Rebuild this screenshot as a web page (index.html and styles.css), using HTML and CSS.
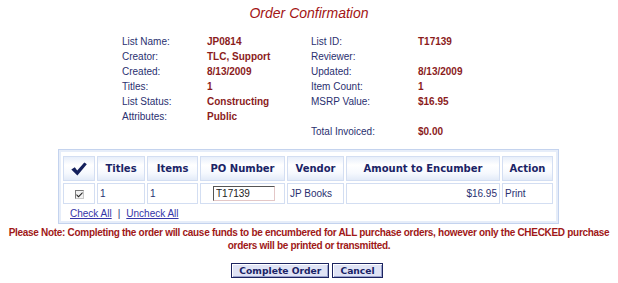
FILE: index.html
```html
<!DOCTYPE html>
<html>
<head>
<meta charset="utf-8">
<link rel="stylesheet" href="styles.css">
</head>
<body>
<h1 class="title">Order Confirmation</h1>
<div class="info">
  <span class="lbl">List Name:</span><span class="val">JP0814</span><span class="lbl">List ID:</span><span class="val">T17139</span>
  <span class="lbl">Creator:</span><span class="val">TLC, Support</span><span class="lbl">Reviewer:</span><span class="val"></span>
  <span class="lbl">Created:</span><span class="val">8/13/2009</span><span class="lbl">Updated:</span><span class="val">8/13/2009</span>
  <span class="lbl">Titles:</span><span class="val">1</span><span class="lbl">Item Count:</span><span class="val">1</span>
  <span class="lbl">List Status:</span><span class="val">Constructing</span><span class="lbl">MSRP Value:</span><span class="val">$16.95</span>
  <span class="lbl">Attributes:</span><span class="val">Public</span><span class="lbl"></span><span class="val"></span>
  <span class="lbl"></span><span class="val"></span><span class="lbl">Total Invoiced:</span><span class="val">$0.00</span>
</div>
<div class="box">
  <table class="po">
    <colgroup>
      <col class="c1"><col class="c2"><col class="c3"><col class="c4"><col class="c5"><col class="c6"><col class="c7">
    </colgroup>
    <thead>
      <tr>
        <th><svg class="bigcheck" width="16" height="14" viewBox="0 0 16 14"><path d="M0.3 7.4 L3.8 5.2 L6.2 8.4 L13.4 0.4 L15.8 2.2 L6.4 13.6 Z" fill="#14205c"/></svg></th>
        <th>Titles</th>
        <th>Items</th>
        <th>PO Number</th>
        <th>Vendor</th>
        <th>Amount to Encumber</th>
        <th>Action</th>
      </tr>
    </thead>
    <tbody>
      <tr>
        <td class="ctr"><span class="cbox"><svg width="7" height="7" viewBox="0 0 7 7"><path d="M0.5 3 L2.5 5 L6.5 1 L6.5 2.6 L2.5 6.6 L0.5 4.6 Z" fill="#222"/></svg></span></td>
        <td>1</td>
        <td>1</td>
        <td class="ctr"><input class="po-input" type="text" value="T17139"></td>
        <td>JP Books</td>
        <td class="amt">$16.95</td>
        <td>Print</td>
      </tr>
    </tbody>
  </table>
  <div class="checklinks"><a href="#">Check All</a><span class="sep">|</span><a href="#">Uncheck All</a></div>
</div>
<p class="note"><span class="line">Please Note: Completing the order will cause funds to be encumbered for ALL purchase orders, however only the CHECKED purchase</span><br><span class="line">orders will be printed or transmitted.</span></p>
<div class="actions">
  <button class="btn">Complete Order</button><button class="btn">Cancel</button>
</div>
</body>
</html>
```
FILE: styles.css
```css
html, body {
  margin: 0;
  padding: 0;
  background: #ffffff;
}
body {
  width: 618px;
  font-family: "Liberation Sans", Arial, sans-serif;
  font-size: 10px;
  color: #2a3070;
}
.title {
  margin: 5px 0 0 0;
  text-align: center;
  font-size: 14px;
  line-height: 16px;
  font-style: italic;
  font-weight: normal;
  color: #a31515;
}
.info {
  display: grid;
  grid-template-columns: 85px 104px 107px 90px;
  grid-auto-rows: 15px;
  align-items: center;
  margin: 13px 0 0 122px;
  line-height: 15px;
}
.lbl {
  color: #2a3070;
}
.val {
  color: #8b1c1c;
  font-weight: bold;
}
.box {
  width: 501px;
  box-sizing: border-box;
  margin: 10px 0 0 58px;
  border: 1px solid #c4d3ee;
  box-shadow: inset 0 0 0 2px #e6edf9;
  background: #ffffff;
  padding: 4px 2px 1px 2px;
}
.po {
  table-layout: fixed;
  width: 494px;
  border-collapse: separate;
  border-spacing: 2px;
}
.c1 { width: 32px; }
.c2 { width: 48px; }
.c3 { width: 51px; }
.c4 { width: 85px; }
.c5 { width: 57px; }
.c6 { width: 154px; }
.c7 { width: 51px; }
.po th, .po td {
  border: 1px solid #d3def2;
  padding: 0 2px;
  box-sizing: border-box;
}
.po th {
  height: 25px;
  background: linear-gradient(#e7eefa 0%, #ffffff 35%, #f6f9fe 70%, #e3ebf8 100%);
  font-family: "DejaVu Sans", Verdana, sans-serif;
  font-size: 10px;
  font-weight: bold;
  color: #1a2466;
  text-align: center;
  vertical-align: middle;
  white-space: nowrap;
}
.bigcheck {
  display: block;
  margin: 0 auto;
}
.po td {
  height: 21px;
  background: #ffffff;
  color: #2a3070;
  font-size: 10px;
  vertical-align: middle;
  white-space: nowrap;
}
.po td.ctr {
  text-align: center;
}
.po td.amt {
  text-align: right;
}
.cbox {
  display: inline-flex;
  align-items: center;
  justify-content: center;
  width: 9px;
  height: 9px;
  box-sizing: border-box;
  border: 1px solid #7a7a7a;
  border-right-color: #c8c8c8;
  border-bottom-color: #c8c8c8;
  background: #f2f2f2;
  vertical-align: middle;
}
.cbox svg {
  display: block;
}
.po-input {
  width: 62px;
  height: 15px;
  box-sizing: border-box;
  padding: 0 2px;
  margin: 0;
  border: 1px solid #555555;
  border-right-color: #e3c7c7;
  border-bottom-color: #e3c7c7;
  font-family: "Liberation Sans", Arial, sans-serif;
  font-size: 10px;
  color: #222222;
  background: #ffffff;
  display: block;
  margin-left: 10px;
}
.checklinks {
  height: 16px;
  line-height: 16px;
  padding-left: 9px;
  font-size: 10px;
}
.checklinks a {
  color: #3535a8;
  text-decoration: underline;
}
.sep {
  margin: 0 6px;
  color: #2a3070;
}
.note {
  margin: 2px 0 0 0;
  text-align: center;
  font-size: 10px;
  line-height: 13px;
  font-weight: bold;
  color: #a01818;
  letter-spacing: -0.3px;
}
.line {
  white-space: nowrap;
}
.actions {
  display: flex;
  justify-content: center;
  gap: 3px;
  margin-top: 11px;
  padding-right: 4px;
}
.btn {
  height: 15px;
  padding: 0 7px;
  margin: 0;
  border: 1px solid #1c2460;
  box-shadow: inset 1px 1px 0 #ffffff, inset -1px -1px 0 #9aa3cf;
  background: #dfe3f5;
  font-family: "DejaVu Sans", Verdana, sans-serif;
  font-size: 9.2px;
  font-weight: bold;
  color: #1a2466;
  line-height: 13px;
}
```
